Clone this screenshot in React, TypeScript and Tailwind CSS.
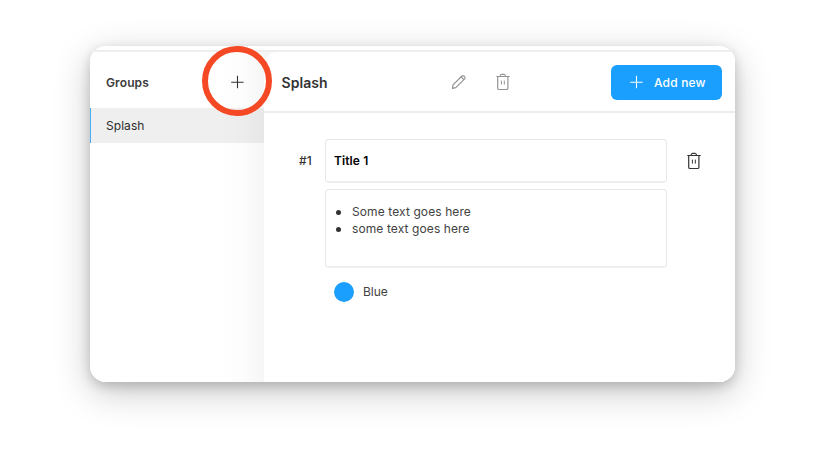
import React from "react";

function TrashIcon({ className }: { className: string }) {
  return (
    <svg className={className} width="14" height="18" viewBox="0 0 14 18" fill="none" stroke="currentColor" strokeWidth="1.2" strokeLinejoin="round">
      <path d="M0.3 3.5H13.7" />
      <path d="M1.7 3.5V15.2Q1.7 16.5 3 16.5H10.6Q11.9 16.5 11.9 15.2V3.5" />
      <path d="M4 3.4Q4.3 1.4 5.6 1.4H8Q9.3 1.4 9.6 3.4" />
      <path d="M5.4 7.6V11.6M8.3 7.6V11.6" strokeWidth="1" />
    </svg>
  );
}

function PencilIcon() {
  return (
    <svg className="text-[#949494]" width="16" height="16" viewBox="0 0 16 16" fill="none" stroke="currentColor" strokeWidth="1.2" strokeLinejoin="round" strokeLinecap="round">
      <path d="M1.5 14.3L2 10.9L10.9 2Q12.1 1 13.4 2.3Q14.7 3.6 13.7 4.8L4.8 13.7Z" />
      <path d="M10.2 3L12.8 5.6" />
    </svg>
  );
}

function PlusIcon({ className }: { className: string }) {
  return (
    <svg className={className} width="14" height="14" viewBox="0 0 14 14" fill="none" stroke="currentColor" strokeWidth="1.1">
      <path d="M7.5 0.8V13.2M1.2 7.2H13.6" />
    </svg>
  );
}

function Sidebar() {
  return (
    <aside className="relative flex w-[174px] shrink-0 flex-col">
      <div className="flex h-14 items-center justify-between pt-[4px] pr-5 pl-4">
        <h2 className="pt-px text-[12px] font-semibold tracking-[0.12px] text-[#3b3b3b]">Groups</h2>
        <PlusIcon className="text-[#333333]" />
      </div>
      <div className="flex h-[35px] items-center border-l border-[#47adf7] bg-[#efefef] pt-px pl-[15px] text-[12px] tracking-[0.05px] text-[#2b2b2b]">
        Splash
      </div>
      <div className="pointer-events-none absolute inset-y-0 right-0 w-[44px] bg-linear-to-r from-transparent via-black/[0.01] to-black/[0.035]" />
      <div className="pointer-events-none absolute top-[-6px] left-[112px] z-10 h-[70px] w-[70px] rounded-full border-[6px] border-[#f44924]" />
    </aside>
  );
}

function Header() {
  return (
    <header className="flex h-[61px] items-center border-b-2 border-[#ededed] pt-px pr-[13px] pl-[17px]">
      <h1 className="w-[170px] pl-[0.5px] text-[14px] font-semibold tracking-[0.05px] text-[#333333]">Splash</h1>
      <PencilIcon />
      <TrashIcon className="ml-[29px] text-[#949494]" />
      <button className="ml-auto flex h-[35px] w-[111px] items-center rounded-[6px] bg-[#1a9fff] pl-[18px] text-[12px] font-medium tracking-[0.18px] text-white">
        <PlusIcon className="mr-[11px]" />
        <span className="pt-px">Add new</span>
      </button>
    </header>
  );
}

export default function App() {
  return (
    <div className="h-[460px] w-[826px] bg-white px-[90px] pt-[46px] font-['Inter',sans-serif]">
      <div className="h-[336px] w-[645px] rounded-[16px] shadow-[0_10px_36px_rgba(0,0,0,0.22),0_4px_12px_rgba(0,0,0,0.18)]">
        <div className="flex h-full flex-col overflow-hidden rounded-[16px] bg-white">
          <div className="h-[6px] shrink-0 border-b-2 border-[#eeeeee]" />
          <div className="flex min-h-0 flex-1 bg-white">
            <Sidebar />
            <div className="min-w-0 flex-1 bg-[linear-gradient(to_right,#f6f6f6_0,#fafafa_16px,#ffffff_17px)]">
              <main className="flex h-full flex-col rounded-tl-[14px] bg-white">
                <Header />
                <section className="flex pt-[26px]">
                  <div className="flex h-11 w-[61px] items-center pl-[35px] text-[12px] font-medium tracking-[0.1px] text-[#333333]">#1</div>
                  <div className="w-[342px]">
                    <div className="flex h-11 items-center rounded-[4px] border border-b-2 border-[#e7e7e7] border-b-[#eeeeee] pl-2 text-[12px] font-semibold tracking-[0.1px] text-black">Title 1</div>
                    <ul className="mt-[6px] h-[79px] rounded-[4px] border border-b-2 border-[#e7e7e7] border-b-[#eeeeee] pt-[13px] pl-[10px] text-[12px] leading-[17px] tracking-[0.1px] text-[#424242]">
                      {["Some text goes here", "some text goes here"].map((line) => (
                        <li key={line} className="flex items-center">
                          <span className="mt-px mr-[11px] h-[5px] w-[5px] rounded-full bg-[#333333]" />
                          {line}
                        </li>
                      ))}
                    </ul>
                    <div className="mt-[14px] ml-[9px] flex items-center gap-[9px] text-[12px] text-[#424242]">
                      <span className="h-5 w-5 rounded-full bg-[#1a9fff]" />
                      Blue
                    </div>
                  </div>
                  <div className="ml-5 flex h-11 items-center">
                    <TrashIcon className="text-[#333333]" />
                  </div>
                </section>
              </main>
            </div>
          </div>
        </div>
      </div>
    </div>
  );
}
